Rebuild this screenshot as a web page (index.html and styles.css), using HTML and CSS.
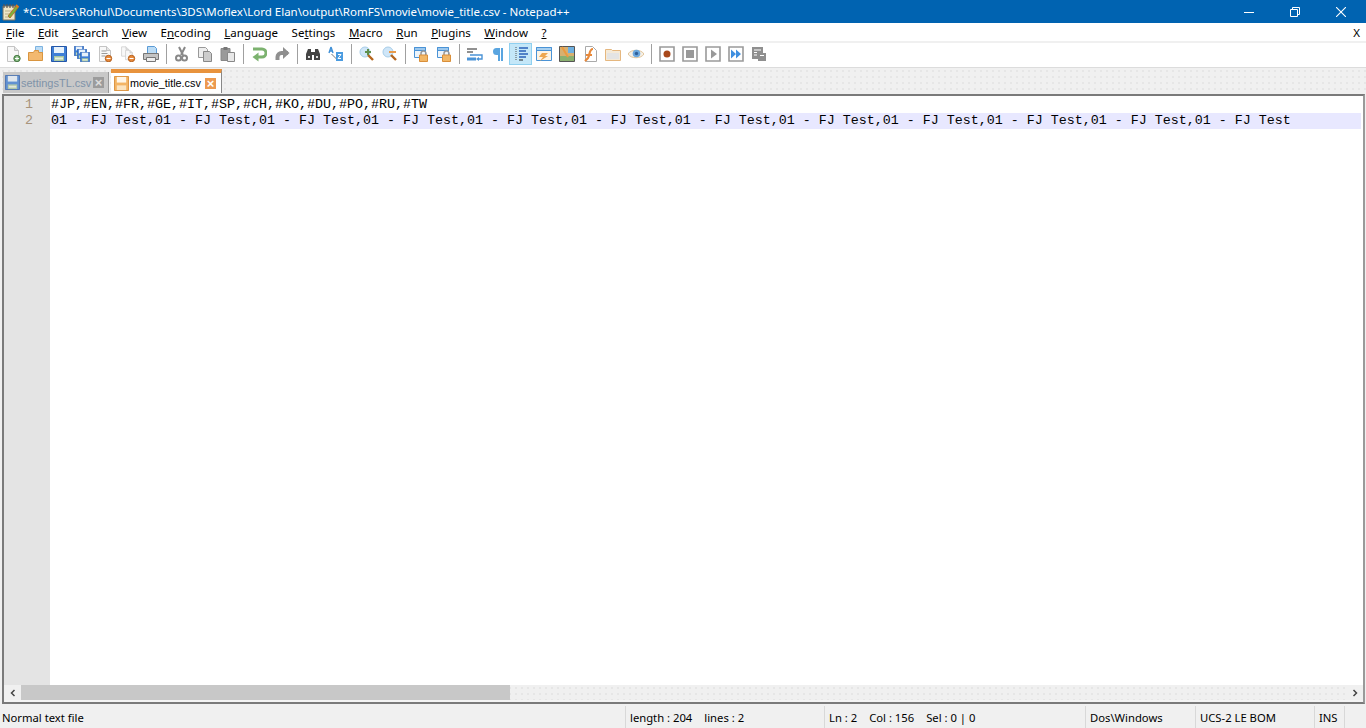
FILE: index.html
```html
<!DOCTYPE html>
<html lang="en">

<head>
    <meta charset="UTF-8" />
    <title>movie_title.csv - Notepad++</title>
    <link rel="stylesheet" href="styles.css">
</head>

<body>
    <svg class="defs" width="0" height="0">
        <symbol id="floppy" viewBox="0 0 16 16">
            <path d="M.5 .5h15v15H.5z" fill="#3f7fd6" stroke="#2457a8" />
            <path d="M3 1h10v6H3z" fill="#e8f2fb" />
            <path d="M3 10h10v5H3z" fill="#a9c7a0" />
            <path d="M4 11.500h8v2H4z" fill="#e8f0e0" />
        </symbol>
        <symbol id="doc" viewBox="0 0 16 16">
            <path d="M2.500 .5h7l4 4v11h-11z" fill="#f8f8f8" stroke="#c4c4c4" />
            <path d="M9.500 .5v4h4" fill="#e4e4e4" stroke="#c4c4c4" />
        </symbol>
        <symbol id="lock" viewBox="0 0 16 16">
            <path d="M1.500 1.500h11v10h-11z" fill="#eef5fb" stroke="#4a93d6" />
            <path d="M1.500 1.500h11v3h-11z" fill="#9cc8ee" stroke="#4a93d6" />
            <path d="M8 9V7.500a2.500 2.500 0 0 1 5 0V9" fill="none" stroke="#9a9a9a" stroke-width="1.500" />
            <path d="M6.500 9h8v6.500h-8z" fill="#f2b766" stroke="#d98f3a" />
        </symbol>
        <symbol id="box" viewBox="0 0 16 16">
            <path d="M1 1h14v14H1z" fill="#fff" stroke="#9a9a9a" stroke-width="1.600" />
        </symbol>
    </svg>

    <div class="titlebar">
        <svg class="app-icon" viewBox="0 0 18 18">
            <path d="M2 3h12v14H2z" fill="#efe6c8" stroke="#7d7360" />
            <path d="M3 1v4M6 1v4M9 1v4M12 1v4" stroke="#555" stroke-width="1.200" />
            <path d="M4 8h7M4 11h5M4 14h6" stroke="#b9ad88" />
            <path d="M7 13 15 3l2 2-8 10z" fill="#7fb23c" stroke="#b5651d" stroke-width=".8" />
            <path d="M15 2l2.500 2.500" stroke="#e07b1a" stroke-width="2" />
        </svg>
        <span class="title-text">*C:\Users\Rohul\Documents\3DS\Moflex\Lord Elan\output\RomFS\movie\movie_title.csv - Notepad++</span>
        <div class="win-controls">
            <div class="win-btn">
                <svg width="10" height="10" viewBox="0 0 10 10"><path d="M0 5.500h10" stroke="#fff" /></svg>
            </div>
            <div class="win-btn">
                <svg width="10" height="10" viewBox="0 0 10 10"><path d="M.5 2.500h7v7h-7zM2.500 2.500v-2h7v7h-2" fill="none" stroke="#fff" /></svg>
            </div>
            <div class="win-btn">
                <svg width="10" height="10" viewBox="0 0 10 10"><path d="M0 0l10 10M10 0 0 10" stroke="#fff" stroke-width="1.100" /></svg>
            </div>
        </div>
    </div>

    <div class="menubar">
        <span class="menu-item"><u>F</u>ile</span>
        <span class="menu-item"><u>E</u>dit</span>
        <span class="menu-item"><u>S</u>earch</span>
        <span class="menu-item"><u>V</u>iew</span>
        <span class="menu-item">E<u>n</u>coding</span>
        <span class="menu-item"><u>L</u>anguage</span>
        <span class="menu-item">Se<u>t</u>tings</span>
        <span class="menu-item"><u>M</u>acro</span>
        <span class="menu-item"><u>R</u>un</span>
        <span class="menu-item"><u>P</u>lugins</span>
        <span class="menu-item"><u>W</u>indow</span>
        <span class="menu-item"><u>?</u></span>
        <span class="menu-close">X</span>
    </div>

    <div class="toolbar">
        <div class="tool"><svg viewBox="0 0 16 16"><use href="#doc" /><circle cx="12" cy="12.500" r="3.200" fill="#6fa86a" stroke="#4c7d48" /><path d="M10 12.500h4M12 10.500v4" stroke="#fff" /></svg></div>
        <div class="tool"><svg viewBox="0 0 16 16"><path d="M7.500 .5h7v10h-7z" fill="#bcdcf5" stroke="#7db3e0" /><path d="M.5 6.500h5l1-2h4v2h4v8h-14z" fill="#f3b96f" stroke="#d9953f" /></svg></div>
        <div class="tool"><svg viewBox="0 0 16 16"><use href="#floppy" /></svg></div>
        <div class="tool"><svg viewBox="0 0 16 16"><use href="#floppy" x="0" y="0" width="10" height="10" /><use href="#floppy" x="3" y="3" width="10" height="10" /><use href="#floppy" x="6" y="6" width="10" height="10" /></svg></div>
        <div class="tool"><svg viewBox="0 0 16 16"><use href="#doc" /><path d="M4.500 5h5M4.500 7.500h6M4.500 10h4" stroke="#999" /><circle cx="11.500" cy="12.500" r="3.200" fill="#e88a3c" stroke="#b5601d" /><path d="M9.500 12.500h4" stroke="#fff" /></svg></div>
        <div class="tool"><svg viewBox="0 0 16 16"><use href="#doc" x="0" y="0" width="10" height="11" /><use href="#doc" x="4" y="3" width="10" height="12" /><circle cx="11.500" cy="12.500" r="3.200" fill="#e88a3c" stroke="#b5601d" /><path d="M9.500 12.500h4" stroke="#fff" /></svg></div>
        <div class="tool"><svg viewBox="0 0 16 16"><path d="M4.500 .5h7l2 2v5h-9z" fill="#bcdcf5" stroke="#5a9bd6" /><path d="M.5 7.500h15v6h-15z" fill="#c4c4c4" stroke="#777" /><path d="M3.500 11.500h9v4h-9z" fill="#eee" stroke="#777" /></svg></div>
        <div class="tool-sep"></div>
        <div class="tool"><svg viewBox="0 0 16 16"><path d="M5 1l4 8M11 1 7 9" stroke="#888" stroke-width="2" /><circle cx="4.500" cy="12" r="2.500" fill="none" stroke="#888" stroke-width="2" /><circle cx="10.500" cy="12" r="2.500" fill="none" stroke="#888" stroke-width="2" /></svg></div>
        <div class="tool"><svg viewBox="0 0 16 16"><path d="M1.500 1.500h7l2 2v8h-9z" fill="#eee" stroke="#999" /><path d="M6.500 5.500h6l2 2v8h-8z" fill="#ccc" stroke="#888" /></svg></div>
        <div class="tool"><svg viewBox="0 0 16 16"><path d="M1 2.500h9v12H1z" fill="#999" stroke="#888" /><path d="M3.500 1h4v3h-4z" fill="#777" /><path d="M7.500 6.500h7v9h-7z" fill="#e8e8e8" stroke="#888" /></svg></div>
        <div class="tool-sep"></div>
        <div class="tool"><svg viewBox="0 0 16 16"><path d="M2 3h9a3.500 3.500 0 0 1 0 8H6" fill="none" stroke="#7cb26f" stroke-width="3" /><path d="M7.500 6.500v9L1.500 11z" fill="#7cb26f" /></svg></div>
        <div class="tool"><svg viewBox="0 0 16 16"><path d="M14 7H7.500a4 4 0 0 0-4 4v3" fill="none" stroke="#8f8f8f" stroke-width="4" /><path d="M9 1v12l6.500-6z" fill="#8f8f8f" /></svg></div>
        <div class="tool-sep"></div>
        <div class="tool"><svg viewBox="0 0 16 16"><path d="M1 8l2-5h3v3h4V3h3l2 5v6H9V9H7v5H1z" fill="#444" /><path d="M3 11h2M11 11h2" stroke="#ddd" stroke-width="2" /></svg></div>
        <div class="tool"><svg viewBox="0 0 16 16"><path d="M3 1l-2 6M3 1l2 6M1.700 5h2.600" stroke="#3f8fd6" stroke-width="1.400" fill="none" /><path d="M3.500 8l5 5" stroke="#777" /><path d="M8 6h7v9H8z" fill="#4a9be0" /><path d="M10 8.500h3l-3 4h3" stroke="#fff" fill="none" /></svg></div>
        <div class="tool-sep"></div>
        <div class="tool"><svg viewBox="0 0 16 16"><circle cx="6" cy="6" r="5" fill="#cfe6f8" stroke="#a8cde8" /><path d="M9 9l5 5" stroke="#b5651d" stroke-width="2.400" /><path d="M6 6h6M9 3v6" stroke="#5f8f4e" stroke-width="2" /></svg></div>
        <div class="tool"><svg viewBox="0 0 16 16"><circle cx="6" cy="6" r="5" fill="#cfe6f8" stroke="#a8cde8" /><path d="M9 9l5 5" stroke="#b5651d" stroke-width="2.400" /><path d="M7 6h7" stroke="#e89a4a" stroke-width="2" /></svg></div>
        <div class="tool-sep"></div>
        <div class="tool"><svg viewBox="0 0 16 16"><use href="#lock" /></svg></div>
        <div class="tool"><svg viewBox="0 0 16 16"><use href="#lock" /></svg></div>
        <div class="tool-sep"></div>
        <div class="tool"><svg viewBox="0 0 16 16"><path d="M0 3h10M0 6h6" stroke="#222" /><path d="M0 13h9" stroke="#4a93d6" stroke-width="3" /><path d="M3 9h12v4h-4" fill="none" stroke="#4a93d6" stroke-width="1.400" /><path d="M9 13l3-2v4z" fill="#4a93d6" /></svg></div>
        <div class="tool"><svg viewBox="0 0 16 16"><path d="M9 2H6.500a3.500 3.500 0 0 0 0 7H9z" fill="#5aa5e0" /><path d="M9 2v13M12 2v13" stroke="#5aa5e0" stroke-width="2" /></svg></div>
        <div class="tool tool-on"><svg viewBox="0 0 16 16"><path d="M6 2h9M6 5h7M6 8h9M6 11h7" stroke="#2a62b8" stroke-width="1.500" /><path d="M6 14h4" stroke="#222" /><path d="M3 1v14" stroke="#555" stroke-dasharray="1 1" /></svg></div>
        <div class="tool"><svg viewBox="0 0 16 16"><path d="M.5 1.500h15v13H.5z" fill="#fdf4e4" stroke="#4a93d6" /><path d="M.5 1.500h15v3H.5z" fill="#a8d0f0" stroke="#4a93d6" /><path d="M6 7h6l-3 3h3l-8 5 3-4H3z" fill="#eda750" /></svg></div>
        <div class="tool"><svg viewBox="0 0 16 16"><path d="M.5 .5h15v15H.5z" fill="#d8b070" stroke="#555" /><path d="M9 1h6v6H9z" fill="#6fb0e0" /><path d="M1 10h14v5H1z" fill="#8ab070" /><path d="M3 1l6 10" stroke="#ec9a3e" stroke-width="2" /></svg></div>
        <div class="tool"><svg viewBox="0 0 16 16"><path d="M3.500 .5h7l4 4v11h-11z" fill="#fff" stroke="#aaa" /><path d="M11 3C7 3 8 9 6 12l-3 3M4 9h6" fill="none" stroke="#e8893a" stroke-width="2.200" /></svg></div>
        <div class="tool"><svg viewBox="0 0 16 16"><path d="M.5 3.500h6l1 1h8v10H.5z" fill="#f5ead8" stroke="#e5b77f" /><path d="M2 7h12v6H2z" fill="#e4e4e4" /></svg></div>
        <div class="tool"><svg viewBox="0 0 16 16"><path d="M0 8c3-5 13-5 16 0-3 5-13 5-16 0z" fill="#f6f0e6" stroke="#e0c49a" /><circle cx="8.500" cy="7.500" r="3.800" fill="#6aa6dc" /><circle cx="8.500" cy="7.500" r="1.700" fill="#2f5f99" /></svg></div>
        <div class="tool-sep"></div>
        <div class="tool"><svg viewBox="0 0 16 16"><use href="#box" /><circle cx="8" cy="8" r="3.500" fill="#a8481a" /></svg></div>
        <div class="tool"><svg viewBox="0 0 16 16"><use href="#box" /><path d="M4 4h8v8H4z" fill="#999" /></svg></div>
        <div class="tool"><svg viewBox="0 0 16 16"><use href="#box" /><path d="M6 3.500v9l6-4.500z" fill="#999" /></svg></div>
        <div class="tool"><svg viewBox="0 0 16 16"><use href="#box" /><path d="M3 3.500v9l5-4.500zM8 3.500v9l5-4.500z" fill="#3f8fe0" /></svg></div>
        <div class="tool"><svg viewBox="0 0 16 16"><path d="M1 1h11v12H1z" fill="#8f8f8f" /><path d="M3 4h7M3 6.500h3M3 9h3" stroke="#fff" /><path d="M7 7h8v8H7z" fill="#8f8f8f" /><path d="M9 9.500h4" stroke="#fff" /></svg></div>
    </div>

    <div class="tabbar">
        <div class="tab">
            <svg class="tab-icon" viewBox="0 0 16 16"><use href="#floppy" /></svg>
            <span class="tab-name-off">settingsTL.csv</span>
            <span class="tab-close tab-close-off">&times;</span>
        </div>
        <div class="tab tab-active">
            <svg class="tab-icon" viewBox="0 0 16 16">
                <path d="M.5 .5h15v15H.5z" fill="#f3b464" stroke="#d98f3a" />
                <path d="M3 1h10v6H3z" fill="#fff6e8" />
                <path d="M3 10h10v5H3z" fill="#fbe3bf" />
            </svg>
            <span class="tab-name">movie_title.csv</span>
            <span class="tab-close">&times;</span>
        </div>
    </div>

    <div class="editor">
        <div class="edit-area">
            <div class="gutter">
                <div class="line-no">1</div>
                <div class="line-no">2</div>
            </div>
            <div class="code">
                <div class="code-line">#JP,#EN,#FR,#GE,#IT,#SP,#CH,#KO,#DU,#PO,#RU,#TW</div>
                <div class="code-line code-current">01 - FJ Test,01 - FJ Test,01 - FJ Test,01 - FJ Test,01 - FJ Test,01 - FJ Test,01 - FJ Test,01 - FJ Test,01 - FJ Test,01 - FJ Test,01 - FJ Test,01 - FJ Test</div>
            </div>
        </div>
        <div class="hscroll">
            <div class="arrow">
                <svg width="8" height="8" viewBox="0 0 8 8"><path d="M5.500 1 2.500 4l3 3" fill="none" stroke="#444" stroke-width="1.500" /></svg>
            </div>
            <div class="track"><div class="thumb"></div></div>
            <div class="arrow">
                <svg width="8" height="8" viewBox="0 0 8 8"><path d="M2.500 1l3 3-3 3" fill="none" stroke="#444" stroke-width="1.500" /></svg>
            </div>
        </div>
    </div>

    <div class="statusbar">
        <div class="cell cell-type">Normal text file</div>
        <div class="cell cell-len"><span>length : 204</span><span>lines : 2</span></div>
        <div class="cell cell-pos"><span>Ln : 2</span><span>Col : 156</span><span>Sel : 0 | 0</span></div>
        <div class="cell cell-eol">Dos\Windows</div>
        <div class="cell cell-enc">UCS-2 LE BOM</div>
        <div class="cell cell-ins">INS</div>
    </div>
</body>

</html>
```
FILE: styles.css
```css
* {
    margin: 0;
    padding: 0;
    box-sizing: border-box;
}

body {
    width: 1366px;
    height: 728px;
    overflow: hidden;
    display: flex;
    flex-direction: column;
    background: #f0f0f0;
    font-family: 'Noto Sans', 'Open Sans', sans-serif;
    font-size: 11.5px;
    color: #000;
}

.defs {
    position: absolute;
}

.titlebar {
    height: 23px;
    flex: none;
    display: flex;
    align-items: center;
    background: #0063b1;
    color: #fff;
}

.app-icon {
    width: 18px;
    height: 18px;
    margin-left: 1px;
    margin-right: 4px;
}

.title-text {
    white-space: nowrap;
}

.win-controls {
    display: flex;
    margin-left: auto;
    margin-right: 2px;
}

.win-btn {
    width: 46px;
    height: 20px;
    display: flex;
    align-items: center;
    justify-content: center;
}

.menubar {
    height: 18px;
    flex: none;
    display: flex;
    align-items: center;
    padding-left: 6px;
    background: #fff;
}

.menu-item {
    margin-right: 13.5px;
}

.menu-close {
    margin-left: auto;
    margin-right: 6px;
}

.toolbar {
    height: 25px;
    flex: none;
    display: flex;
    align-items: center;
    margin-top: 2px;
    padding-left: 1px;
    padding-bottom: 2px;
    background: #fff;
    border-bottom: 1px solid #dcdcdc;
}

.tool {
    width: 23px;
    height: 22px;
    flex: none;
    display: flex;
    align-items: center;
    justify-content: center;
}

.tool svg {
    width: 16px;
    height: 16px;
}

.tool-on {
    background: #c4e7f8;
    border: 1px solid #8fd0f0;
}

.tool-sep {
    width: 8px;
    height: 20px;
    flex: none;
    background: linear-gradient(#a0a0a0, #a0a0a0) center / 1px 100% no-repeat;
}

.tabbar {
    height: 25px;
    flex: none;
    display: flex;
    align-items: flex-end;
    padding-left: 3px;
    background-color: #f0f0f0;
    background-image: radial-gradient(#e6e6e6 30%, transparent 35%);
    background-size: 6px 6px;
}

.tab {
    width: 106px;
    height: 21px;
    display: flex;
    align-items: center;
    padding-left: 2px;
    background-color: #c8c8c8;
    background-image: radial-gradient(#d4d4d4 40%, transparent 45%);
    background-size: 2px 2px;
    border-right: 1px solid #999;
    font-family: 'Liberation Sans', sans-serif;
    font-size: 11px;
}

.tab-active {
    width: 111px;
    height: 24px;
    margin-left: 2px;
    padding-left: 3px;
    background: #fff;
    border-top: 4px solid #e8933d;
    border-right: 1px solid #888;
    font-size: 10.8px;
}

.tab-icon {
    width: 15px;
    height: 15px;
    flex: none;
    opacity: .75;
}

.tab-active .tab-icon {
    opacity: 1;
}

.tab-name-off {
    margin-left: 1px;
    width: 72px;
    color: #7f93a8;
    white-space: nowrap;
}

.tab-name {
    margin-left: 1px;
    width: 75px;
    white-space: nowrap;
}

.tab-close {
    width: 11px;
    height: 11px;
    display: flex;
    align-items: center;
    justify-content: center;
    background: #ec9a50;
    color: #fff;
    font-size: 13px;
    font-weight: bold;
    line-height: 11px;
}

.tab-close-off {
    background: #9c9c9c;
    color: #ddd;
}

.editor {
    flex: none;
    height: 610px;
    margin: 1px 1px 0 2px;
    display: flex;
    flex-direction: column;
    background: #fff;
    border-top: 2px solid #7a7a7a;
    border-left: 2px solid #7a7a7a;
    border-right: 2px solid #9a9a9a;
    border-bottom: 2px solid #7a7a7a;
}

.edit-area {
    flex: 1;
    min-height: 0;
    display: flex;
}

.gutter {
    width: 46px;
    flex: none;
    padding-top: 1px;
    background: #e4e4e4;
}

.line-no {
    height: 16px;
    padding-right: 17px;
    text-align: right;
    color: #a8947c;
    font-family: 'Liberation Mono', monospace;
    font-size: 13.33px;
    line-height: 16px;
}

.code {
    flex: 1;
    padding-top: 1px;
    padding-right: 2px;
    font-family: 'Liberation Mono', monospace;
    font-size: 13.33px;
    line-height: 16px;
    color: #000;
}

.code-line {
    height: 16px;
    padding-left: 1px;
    white-space: pre;
}

.code-current {
    background: #e8e8ff;
}

.hscroll {
    height: 17px;
    flex: none;
    display: flex;
    background-color: #f0f0f0;
    border-bottom: 2px solid #f4f4f4;
}

.arrow {
    width: 17px;
    flex: none;
    display: flex;
    align-items: center;
    justify-content: center;
}

.track {
    flex: 1;
    background-image: radial-gradient(#e6e6e6 30%, transparent 35%);
    background-size: 6px 6px;
}

.thumb {
    width: 489px;
    height: 100%;
    background-color: #c8c8c8;
    background-image: radial-gradient(#d4d4d4 40%, transparent 45%);
    background-size: 2px 2px;
}

.statusbar {
    flex: 1;
    display: flex;
    align-items: center;
    margin-top: 2px;
    background-color: #f0f0f0;
    font-size: 11.25px;
}

.cell {
    height: 100%;
    display: flex;
    align-items: center;
    flex: none;
    padding-left: 4px;
    border-right: 1px solid #d8d8d8;
    white-space: nowrap;
}

.cell-type {
    width: 626px;
    padding-left: 2px;
}

.cell-len {
    width: 199px;
    gap: 12px;
}

.cell-pos {
    width: 261px;
    gap: 12px;
}

.cell-eol {
    width: 110px;
}

.cell-enc {
    width: 119px;
}

.cell-ins {
    width: 30px;
}
```
